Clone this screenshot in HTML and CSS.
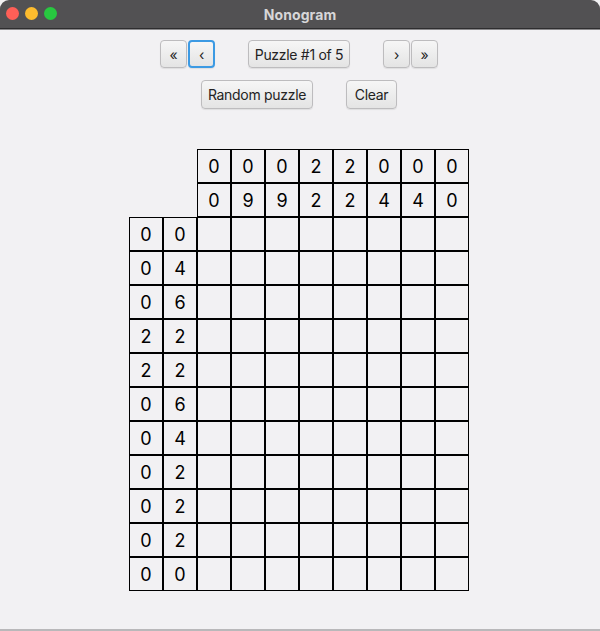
FILE: index.html
```html
<!DOCTYPE html>
<html>
<head>
<meta charset="utf-8">
<title>Nonogram</title>
<link rel="stylesheet" href="styles.css">
</head>
<body>
<div class="window">
  <div class="titlebar">
    <div class="lights">
      <span class="light red"></span>
      <span class="light yellow"></span>
      <span class="light green"></span>
    </div>
    <div class="title">Nonogram</div>
  </div>
  <div class="content">
    <div class="row row1">
      <div class="group">
        <button class="btn small">«</button>
        <button class="btn small focused">‹</button>
      </div>
      <button class="btn label">Puzzle #1 of 5</button>
      <div class="group">
        <button class="btn small">›</button>
        <button class="btn small">»</button>
      </div>
    </div>
    <div class="row row2">
      <button class="btn random">Random puzzle</button>
      <button class="btn clear">Clear</button>
    </div>
    <div class="board" id="board"></div>
  </div>
</div>
<script src="script.js"></script>
</body>
</html>
```

FILE: script.js
```js
(function () {
  var colClues = [[0,0,0,2,2,0,0,0],[0,9,9,2,2,4,4,0]];
  var rowClues = [[0,0],[0,4],[0,6],[2,2],[2,2],[0,6],[0,4],[0,2],[0,2],[0,2],[0,0]];
  var board = document.getElementById('board');
  function cell(text, cls) {
    var d = document.createElement('div');
    d.className = 'cell' + (cls ? ' ' + cls : '');
    if (text !== undefined) d.textContent = text;
    board.appendChild(d);
  }
  for (var r = 0; r < 2; r++) {
    cell(undefined, 'empty');
    cell(undefined, 'empty');
    for (var c = 0; c < 8; c++) cell(colClues[r][c]);
  }
  for (var i = 0; i < rowClues.length; i++) {
    cell(rowClues[i][0]);
    cell(rowClues[i][1]);
    for (var j = 0; j < 8; j++) cell('');
  }
})();
```

FILE: styles.css
```css
html, body {
  margin: 0;
  padding: 0;
  background: #f2f1f3;
}
.window {
  width: 600px;
  height: 631px;
  box-sizing: border-box;
  background: #f2f1f3;
  border-bottom: 2px solid #b9b8ba;
  font-family: "Inter", "Liberation Sans", sans-serif;
  display: flex;
  flex-direction: column;
}
.titlebar {
  height: 28px;
  background: #525153;
  border-bottom: 1px solid #2e2d2f;
  box-shadow: 0 1px 0 #8a898b;
  position: relative;
  display: flex;
  align-items: center;
  justify-content: center;
  border-radius: 9px 9px 0 0;
}
.lights {
  position: absolute;
  left: 6px;
  top: 7px;
  display: flex;
  gap: 6px;
}
.light {
  width: 13px;
  height: 13px;
  border-radius: 50%;
  display: block;
}
.red { background: #fe5f57; }
.yellow { background: #fdbc2e; }
.green { background: #28c840; }
.title {
  color: #d7d6d8;
  font-weight: 700;
  font-size: 14px;
  letter-spacing: 0.1px;
}
.content {
  display: flex;
  flex-direction: column;
  align-items: center;
  padding-top: 11px;
  padding-right: 2px;
}
.row {
  display: flex;
  justify-content: center;
  gap: 33px;
}
.row2 {
  margin-top: 12px;
}
.group {
  display: flex;
  gap: 1px;
}
.btn {
  font-family: "Inter", "Liberation Sans", sans-serif;
  font-size: 14px;
  color: #232323;
  height: 28px;
  padding: 0;
  box-sizing: border-box;
  border: 1px solid #bdbcbe;
  border-radius: 4px;
  background: linear-gradient(#f6f6f6, #e4e4e4);
  box-shadow: 0 1px 1px rgba(0,0,0,0.08);
  display: flex;
  align-items: center;
  justify-content: center;
  letter-spacing: -0.3px;
}
.small { width: 27px; }
.focused {
  border: 2px solid #3c9ae3;
}
.label { width: 102px; }
.random { width: 112px; height: 29px; }
.clear { width: 51px; height: 29px; }
.board {
  margin-top: 40px;
  display: grid;
  grid-template-columns: repeat(10, 34px);
  grid-auto-rows: 34px;
}
.cell {
  box-sizing: border-box;
  border: 1px solid #000;
  display: flex;
  align-items: center;
  justify-content: center;
  font-size: 18px;
  color: #000;
  font-family: "Inter", "Liberation Sans", sans-serif;
}
.cell.empty {
  border: none;
}
```
